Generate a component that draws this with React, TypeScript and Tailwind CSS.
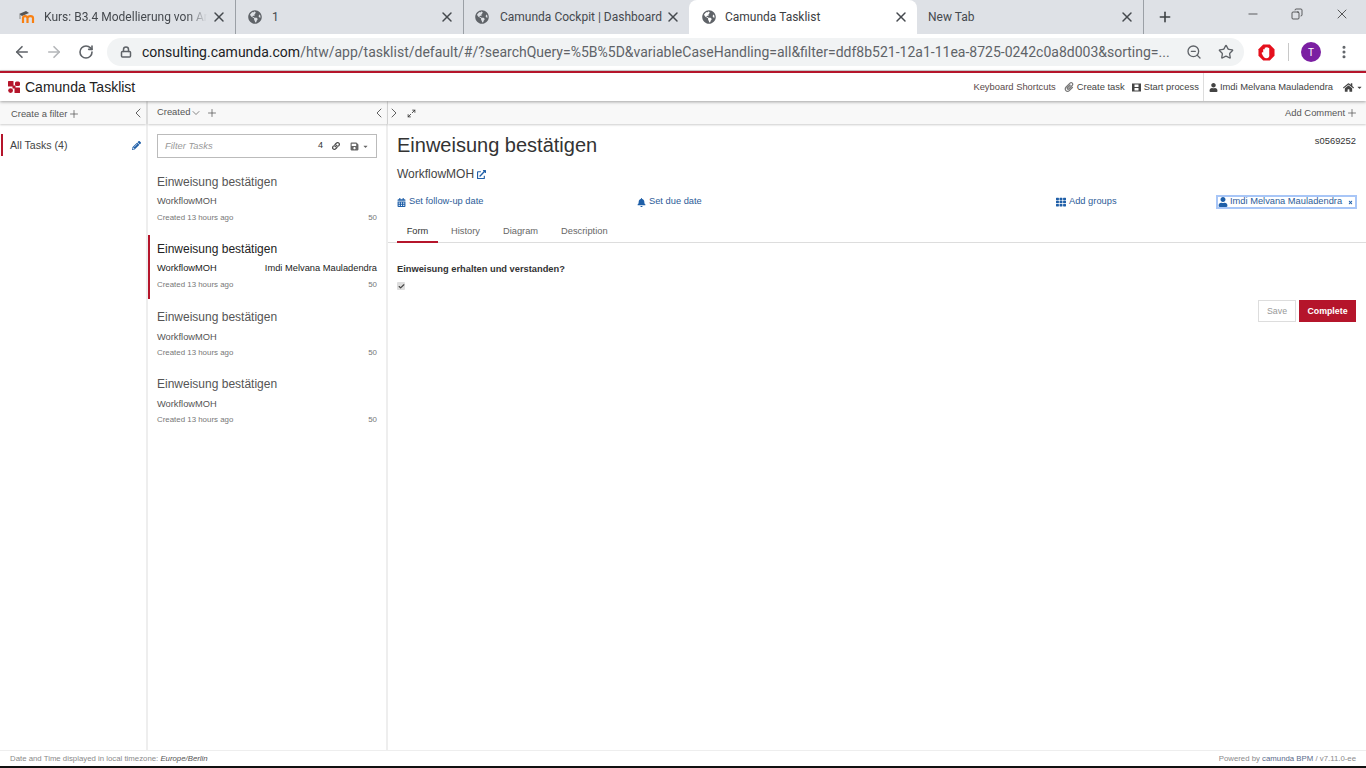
import {
  ArrowLeft,
  ArrowRight,
  Check,
  ChevronDown,
  ChevronLeft,
  ChevronRight,
  Copy,
  Lock,
  Maximize2,
  Minus,
  MoreVertical,
  Plus,
  RotateCw,
  Star,
  X,
  ZoomOut,
} from "lucide-react";
import {
  FaBell,
  FaCalendarAlt,
  FaCaretDown,
  FaExternalLinkAlt,
  FaGlobeAmericas,
  FaHome,
  FaLink,
  FaPaperclip,
  FaPencilAlt,
  FaSave,
  FaTh,
  FaTimes,
  FaUser,
} from "react-icons/fa";

const TASKS = [
  { assignee: "", selected: false },
  { assignee: "Imdi Melvana Mauladendra", selected: true },
  { assignee: "", selected: false },
  { assignee: "", selected: false },
];

function MoodleIcon() {
  return (
    <svg viewBox="0 0 18 14" className="h-[14px] w-[18px]">
      <path d="M1 4 L8 1 L11 3 L4 6 Z" fill="#555" />
      <path d="M2 5 V9" stroke="#888" strokeWidth="1" />
      <path
        d="M5 13 V8 C5 5.5 9 5.5 9.5 8 V13 M9.5 8 C10 5.5 15 5.5 15 8 V13"
        fill="none"
        stroke="#f98012"
        strokeWidth="2.2"
      />
    </svg>
  );
}

function CamundaLogo() {
  return (
    <svg viewBox="0 0 12 12" className="h-3 w-3">
      <rect x="0" y="0" width="5.5" height="5.5" rx="0.6" fill="#b5152b" />
      <rect x="7" y="0.5" width="5" height="4.5" rx="1.5" fill="#b5152b" />
      <circle cx="2.6" cy="9.6" r="2.4" fill="#b5152b" />
      <rect x="6.5" y="6.5" width="5.5" height="5.5" rx="0.6" fill="#b5152b" />
      <rect x="4.5" y="4.5" width="3" height="3" fill="#b5152b" />
    </svg>
  );
}

function StopHandIcon() {
  return (
    <svg viewBox="0 0 18 18" className="h-[17px] w-[17px]">
      <path d="M5.5 0.5 H12.5 L17.5 5.5 V12.5 L12.5 17.5 H5.5 L0.5 12.5 V5.5 Z" fill="#e5101d" />
      <path
        d="M5.5 9 V6 a0.8 0.8 0 0 1 1.6 0 V4.5 a0.8 0.8 0 0 1 1.6 0 V4 a0.8 0.8 0 0 1 1.6 0 V4.8 a0.8 0.8 0 0 1 1.6 0 V11 C12.5 13.5 11 15 9 15 C6.5 15 5.5 13 4 10 C3.6 9 5 8.5 5.5 9 Z"
        fill="#fff"
      />
    </svg>
  );
}

function StartProcessIcon() {
  return (
    <svg viewBox="0 0 9 9" className="mr-[3px] h-[9px] w-[9px]">
      <rect x="0" y="0.5" width="9" height="8" fill="#444" />
      <rect x="2.5" y="1.5" width="4" height="2.5" fill="#fff" />
      <rect x="2.5" y="5" width="4" height="2.5" fill="#fff" />
    </svg>
  );
}

function BrowserTab({
  title,
  active,
  icon,
  width,
  fade,
  divider,
  textLeft,
}: {
  title: string;
  active?: boolean;
  icon?: React.ReactNode;
  width: string;
  fade?: boolean;
  divider?: boolean;
  textLeft?: string;
}) {
  return (
    <div
      className={`flex h-[34px] items-center ${width} ${
        active ? "rounded-t-lg bg-white text-[#3c4043]" : "text-[#45494e]"
      } ${divider ? "border-r border-[#9ba0a6]" : ""}`}
    >
      <div className={`flex min-w-0 flex-1 items-center ${textLeft}`}>
        {icon}
        <span
          className={`whitespace-nowrap text-[12px] ${
            fade ? "w-[163px] overflow-hidden [mask-image:linear-gradient(to_right,black_88%,transparent)]" : ""
          }`}
        >
          {title}
        </span>
      </div>
      <X size={16} strokeWidth={2.2} className="mr-[8px] shrink-0 text-[#45494e]" />
    </div>
  );
}

function Toolbar({ children, className }: { children: React.ReactNode; className?: string }) {
  return (
    <div
      className={`flex h-[23px] shrink-0 items-center bg-[#f8f8f8] text-[9.4px] text-[#555] shadow-[0_1px_2px_rgba(0,0,0,0.2)] ${className}`}
    >
      {children}
    </div>
  );
}

export default function App() {
  return (
    <div className="flex h-[768px] w-[1366px] flex-col overflow-hidden bg-white font-['Liberation_Sans',sans-serif] text-[#333]">
      {/* browser chrome */}
      <div className="flex h-[34px] shrink-0 items-center bg-[#dee1e6] pl-[8px] font-['Roboto',sans-serif]">
        <BrowserTab
          width="w-[228px]"
          title="Kurs: B3.4 Modellierung von Ar"
          fade
          divider
          textLeft="pl-[10px] gap-[8px]"
          icon={<MoodleIcon />}
        />
        <BrowserTab
          width="w-[228px]"
          title="1"
          divider
          textLeft="pl-[12px] gap-[10px]"
          icon={<FaGlobeAmericas size={14} className="text-[#5f6368]" />}
        />
        <BrowserTab
          width="w-[225px]"
          title="Camunda Cockpit | Dashboard"
          textLeft="pl-[11px] gap-[11px]"
          icon={<FaGlobeAmericas size={14} className="text-[#5f6368]" />}
        />
        <BrowserTab
          active
          width="w-[228px]"
          title="Camunda Tasklist"
          textLeft="pl-[13px] gap-[9px]"
          icon={<FaGlobeAmericas size={14} className="text-[#5f6368]" />}
        />
        <BrowserTab width="w-[227px]" title="New Tab" divider textLeft="pl-[11px]" />
        <Plus size={16} strokeWidth={2.4} className="ml-[13px] text-[#3c4043]" />
        <div className="ml-auto flex items-center gap-[31px] pr-[16px] pb-[6px] text-[#222]">
          <Minus size={14} strokeWidth={1.2} />
          <Copy size={12} strokeWidth={1.4} className="-scale-x-100" />
          <X size={16} strokeWidth={1.1} />
        </div>
      </div>

      <div className="flex h-[37px] shrink-0 items-center border-b border-[#d0d0d0] bg-white font-['Roboto',sans-serif]">
        <div className="flex items-center gap-[14px] pl-[13px] text-[#5f6368]">
          <ArrowLeft size={18} strokeWidth={2.2} />
          <ArrowRight size={18} strokeWidth={2.2} className="text-[#b4b6b9]" />
          <RotateCw size={16} strokeWidth={2.4} className="ml-[1px]" />
        </div>
        <div className="ml-[13px] flex h-[28px] w-[1137px] items-center rounded-full bg-[#f1f3f4] pl-[13px] pr-[10px]">
          <Lock size={12} strokeWidth={3} className="mr-[10px] text-[#5f6368]" />
          <span className="min-w-0 flex-1 whitespace-nowrap text-[14px]">
            <span className="text-[#202124]">consulting.camunda.com</span>
            <span className="text-[#5f6368]">
              /htw/app/tasklist/default/#/?searchQuery=%5B%5D&variableCaseHandling=all&filter=ddf8b521-12a1-11ea-8725-0242c0a8d003&sorting=...
            </span>
          </span>
          <ZoomOut size={16} strokeWidth={2} className="ml-[10px] shrink-0 text-[#5f6368]" />
          <Star size={16} strokeWidth={2} className="ml-[16px] shrink-0 text-[#5f6368]" />
        </div>
        <div className="ml-[14px] flex">
          <StopHandIcon />
        </div>
        <div className="ml-[13px] h-[18px] w-px bg-[#c8c8c8]" />
        <div className="ml-[12px] flex h-[20px] w-[20px] items-center justify-center rounded-full bg-[#7b1fa2] text-[10px] text-white">
          T
        </div>
        <MoreVertical size={16} strokeWidth={2.6} className="ml-[15px] text-[#5f6368]" />
      </div>

      {/* camunda header */}
      <div className="relative z-20 flex h-[30px] shrink-0 items-center border-t-2 border-[#b5152b] bg-white pl-[8px] shadow-[0_1px_3px_rgba(0,0,0,0.35)]">
        <CamundaLogo />
        <span className="ml-[5px] text-[14px] text-[#222]">Camunda Tasklist</span>
        <div className="ml-auto flex h-full items-center text-[9.4px] text-[#444]">
          <span className="text-[#5a4a4a]">Keyboard Shortcuts</span>
          <FaPaperclip size={10} className="ml-[8px] mr-[3px] text-[#777]" />
          <span>Create task</span>
          <div className="ml-[7px] flex">
            <StartProcessIcon />
          </div>
          <span>Start process</span>
          <div className="ml-[4px] mr-[5px] h-full w-px bg-[#ddd]" />
          <FaUser size={9} className="mr-[2px] text-[#444]" />
          <span>Imdi Melvana Mauladendra</span>
          <FaHome size={11} className="ml-[10px] text-[#444]" />
          <FaCaretDown size={7} className="ml-[2px] mr-[3px] text-[#444]" />
        </div>
      </div>

      <div className="flex min-h-0 flex-1">
        {/* filters */}
        <div className="flex w-[148px] shrink-0 flex-col border-r-2 border-[#eee]">
          <Toolbar className="pl-[11px] pt-[3px]">
            <span>Create a filter</span>
            <Plus size={12} strokeWidth={1.5} className="ml-[1px]" />
            <ChevronLeft size={16} strokeWidth={1.4} className="ml-auto -mt-[3px]" />
          </Toolbar>
          <div className="ml-[1px] mt-[10px] flex h-[22px] items-center border-l-2 border-[#b5152b] pl-[7px] pr-[5px] text-[10.6px] text-[#444]">
            <span className="pt-[1px]">All Tasks (4)</span>
            <FaPencilAlt size={9} className="ml-auto text-[#1f5fa8]" />
          </div>
        </div>

        {/* task list */}
        <div className="flex w-[240px] shrink-0 flex-col border-r-2 border-[#eee]">
          <Toolbar className="pl-[9px] -mr-[1px]">
            <span>Created</span>
            <ChevronDown size={12} strokeWidth={1.4} />
            <Plus size={12} strokeWidth={1.5} className="ml-[4px]" />
            <ChevronLeft size={16} strokeWidth={1.4} className="ml-auto" />
          </Toolbar>
          <div className="mx-[9px] mt-[10px] flex h-[24px] items-center border border-[#bbb] pl-[7px] pr-[6px]">
            <span className="pt-[1px] text-[9.4px] italic text-[#999]">Filter Tasks</span>
            <span className="ml-auto text-[9px] text-[#333]">4</span>
            <FaLink size={8} className="ml-[9px] text-[#444]" />
            <FaSave size={9} className="ml-[10px] text-[#666]" />
            <FaCaretDown size={7} className="ml-[3px] mr-[1px] text-[#666]" />
          </div>
          <div className="mt-[10px] flex flex-col">
            {TASKS.map((task, i) => (
              <div
                key={i}
                className={`h-[64px] border-l-2 pl-[7px] pr-[9px] pt-[5px] ${i === 1 ? "mb-[4px]" : "mb-[3px]"} ${
                  task.selected ? "border-[#b5152b] text-[#222]" : "border-transparent text-[#555]"
                }`}
              >
                <div className="text-[12px] leading-[18px]">Einweisung bestätigen</div>
                <div className={`flex text-[9.3px] leading-[18px] ${i >= 2 ? "mt-[2px]" : "mt-[1px]"}`}>
                  <span>WorkflowMOH</span>
                  <span className="ml-auto">{task.assignee}</span>
                </div>
                <div className={`flex text-[7.9px] leading-[14px] text-[#777] ${i >= 2 ? "" : "mt-[1px]"}`}>
                  <span>Created 13 hours ago</span>
                  <span className="ml-auto">50</span>
                </div>
              </div>
            ))}
          </div>
        </div>

        {/* task detail */}
        <div className="flex min-w-0 flex-1 flex-col">
          <Toolbar className="pl-0 pr-[10px] pt-[1px]">
            <ChevronRight size={16} strokeWidth={1.4} className="-ml-[2px]" />
            <Maximize2 size={9} strokeWidth={2.2} className="ml-[5px] text-[#333]" />
            <span className="ml-auto">Add Comment</span>
            <Plus size={12} strokeWidth={1.5} className="ml-[1px] -mr-[2px]" />
          </Toolbar>
          <div className="flex flex-col pl-[9px] pr-[10px]">
            <div className="flex items-start justify-between pt-[9px]">
              <h1 className="text-[20px] leading-[24px] text-[#333]">Einweisung bestätigen</h1>
              <span className="pt-[1px] text-[9.4px] text-[#333]">s0569252</span>
            </div>
            <div className="mt-[9px] flex items-center text-[12px] leading-[16px] text-[#444]">
              WorkflowMOH
              <FaExternalLinkAlt size={9} className="ml-[3px] text-[#1f5fa8]" />
            </div>
            <div className="mt-[13px] flex h-[14px] items-center text-[9.3px] text-[#2d5c98]">
              <div className="flex w-[240px] items-center gap-[3px]">
                <FaCalendarAlt size={9} className="text-[#1f5fa8]" />
                Set follow-up date
              </div>
              <div className="flex w-[419px] items-center gap-[3px]">
                <FaBell size={9} className="text-[#1f5fa8]" />
                Set due date
              </div>
              <div className="flex w-[160px] items-center gap-[3px]">
                <FaTh size={10} className="text-[#1f5fa8]" />
                Add groups
              </div>
              <div className="-mr-[1px] flex h-[14px] w-[141px] items-center gap-[2px] border-2 border-[#a8c6f7] pr-[2px]">
                <FaUser size={10} className="text-[#1f5fa8]" />
                Imdi Melvana Mauladendra
                <FaTimes size={5} className="ml-auto text-[#1f5fa8]" />
              </div>
            </div>
          </div>
          <div className="mt-[13px] flex h-[21px] shrink-0 border-b border-[#ddd] pl-[9px] text-[9.3px] text-[#666]">
            <div className="flex h-[21px] w-[41px] items-center justify-center border-b-2 border-[#b5152b] text-[#333]">
              Form
            </div>
            <div className="ml-[13px] flex h-[20px] items-center">History</div>
            <div className="ml-[23px] flex h-[20px] items-center">Diagram</div>
            <div className="ml-[23px] flex h-[20px] items-center">Description</div>
          </div>
          <div className="flex flex-col pl-[9px] pr-[10px] pt-[20px]">
            <label className="text-[9.3px] font-bold leading-[12px] text-[#333]">
              Einweisung erhalten und verstanden?
            </label>
            <div className="mt-[7px] flex h-2 w-2 items-center justify-center self-start rounded-[1px] bg-[#ddd]">
              <Check size={7} strokeWidth={4} className="text-[#444]" />
            </div>
            <div className="mt-[10px] flex justify-end gap-[3px] text-[8.8px]">
              <div className="flex h-[22px] w-[38px] items-center justify-center border border-[#ddd] pt-[1px] text-[#999]">
                Save
              </div>
              <div className="flex h-[22px] w-[57px] items-center justify-center bg-[#b5152b] pt-[1px] font-bold text-white">
                Complete
              </div>
            </div>
          </div>
        </div>
      </div>

      {/* footer */}
      <div className="flex h-[16px] shrink-0 items-center justify-between border-t border-[#eee] px-[10px] text-[7.8px] text-[#8a8a8a]">
        <span>
          Date and Time displayed in local timezone: <em className="text-[#555]">Europe/Berlin</em>
        </span>
        <span>
          Powered by <span className="text-[#5a6a8a]">camunda BPM</span> / v7.11.0-ee
        </span>
      </div>
      <div className="h-[2px] shrink-0 bg-[#111]" />
    </div>
  );
}
